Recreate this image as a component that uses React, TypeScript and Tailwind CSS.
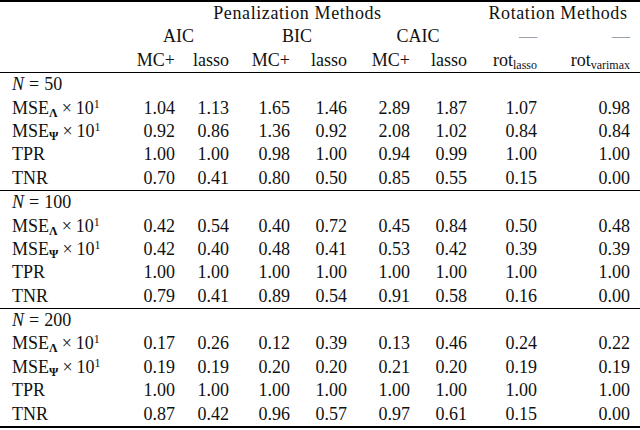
import type { ReactNode } from 'react';

type Row = { label: ReactNode; values: string[] };
type Block = { n: string; rows: Row[] };

const grid =
  'grid grid-cols-[128px_47px_54px_61px_57px_63px_57px_70px_93px_10px] h-[23.4px] leading-[23.4px] items-center';

const mseLambda = (
  <>
    MSE<sub className="text-[12px] font-bold">Λ</sub>
    <span className="mx-[4px]">×</span>10<sup className="text-[12px]">1</sup>
  </>
);
const msePsi = (
  <>
    MSE<sub className="text-[12px] font-bold">Ψ</sub>
    <span className="mx-[4px]">×</span>10<sup className="text-[12px]">1</sup>
  </>
);

const blocks: Block[] = [
  {
    n: '50',
    rows: [
      { label: mseLambda, values: ['1.04', '1.13', '1.65', '1.46', '2.89', '1.87', '1.07', '0.98'] },
      { label: msePsi, values: ['0.92', '0.86', '1.36', '0.92', '2.08', '1.02', '0.84', '0.84'] },
      { label: 'TPR', values: ['1.00', '1.00', '0.98', '1.00', '0.94', '0.99', '1.00', '1.00'] },
      { label: 'TNR', values: ['0.70', '0.41', '0.80', '0.50', '0.85', '0.55', '0.15', '0.00'] },
    ],
  },
  {
    n: '100',
    rows: [
      { label: mseLambda, values: ['0.42', '0.54', '0.40', '0.72', '0.45', '0.84', '0.50', '0.48'] },
      { label: msePsi, values: ['0.42', '0.40', '0.48', '0.41', '0.53', '0.42', '0.39', '0.39'] },
      { label: 'TPR', values: ['1.00', '1.00', '1.00', '1.00', '1.00', '1.00', '1.00', '1.00'] },
      { label: 'TNR', values: ['0.79', '0.41', '0.89', '0.54', '0.91', '0.58', '0.16', '0.00'] },
    ],
  },
  {
    n: '200',
    rows: [
      { label: mseLambda, values: ['0.17', '0.26', '0.12', '0.39', '0.13', '0.46', '0.24', '0.22'] },
      { label: msePsi, values: ['0.19', '0.19', '0.20', '0.20', '0.21', '0.20', '0.19', '0.19'] },
      { label: 'TPR', values: ['1.00', '1.00', '1.00', '1.00', '1.00', '1.00', '1.00', '1.00'] },
      { label: 'TNR', values: ['0.87', '0.42', '0.96', '0.57', '0.97', '0.61', '0.15', '0.00'] },
    ],
  },
];

export default function App() {
  return (
    <div
      className="w-[640px] h-[430px] bg-white text-[18px] text-[#111]"
      style={{ fontFamily: '"Liberation Serif", "Times New Roman", serif' }}
    >
      <div className="h-[2px] bg-black" />

      {/* header */}
      <div className={grid}>
        <div />
        <div className="col-span-6 text-center tracking-[0.6px]">Penalization Methods</div>
        <div className="col-span-2 text-center pl-[19px] tracking-[0.6px]">Rotation Methods</div>
        <div />
      </div>
      <div className={grid}>
        <div />
        <div className="col-span-2 text-center">AIC</div>
        <div className="col-span-2 text-center pl-[18px]">BIC</div>
        <div className="col-span-2 text-center pl-[22px]">CAIC</div>
        <div className="text-right text-gray-400">—</div>
        <div className="text-right text-gray-400">—</div>
        <div />
      </div>
      <div className={grid}>
        <div />
        <div className="text-right">MC+</div>
        <div className="text-right">lasso</div>
        <div className="text-right">MC+</div>
        <div className="text-right">lasso</div>
        <div className="text-right">MC+</div>
        <div className="text-right">lasso</div>
        <div className="text-right">
          rot<sub className="text-[12px]">lasso</sub>
        </div>
        <div className="text-right">
          rot<sub className="text-[12px]">varimax</sub>
        </div>
        <div />
      </div>

      {blocks.map((b, bi) => (
        <div key={b.n}>
          <div className="h-px bg-black" />
          <div className={grid}>
            <div className="pl-[12px] whitespace-nowrap">
              <i>N</i>
              <span className="mx-[5px]">=</span>
              {b.n}
            </div>
          </div>
          {b.rows.map((r, ri) => (
            <div key={ri} className={grid}>
              <div className="pl-[12px] whitespace-nowrap">{r.label}</div>
              {r.values.map((v, vi) => (
                <div key={vi} className="text-right">
                  {v}
                </div>
              ))}
              <div />
            </div>
          ))}
          {bi === blocks.length - 1 && <div className="h-[2px] bg-black" />}
        </div>
      ))}
    </div>
  );
}
